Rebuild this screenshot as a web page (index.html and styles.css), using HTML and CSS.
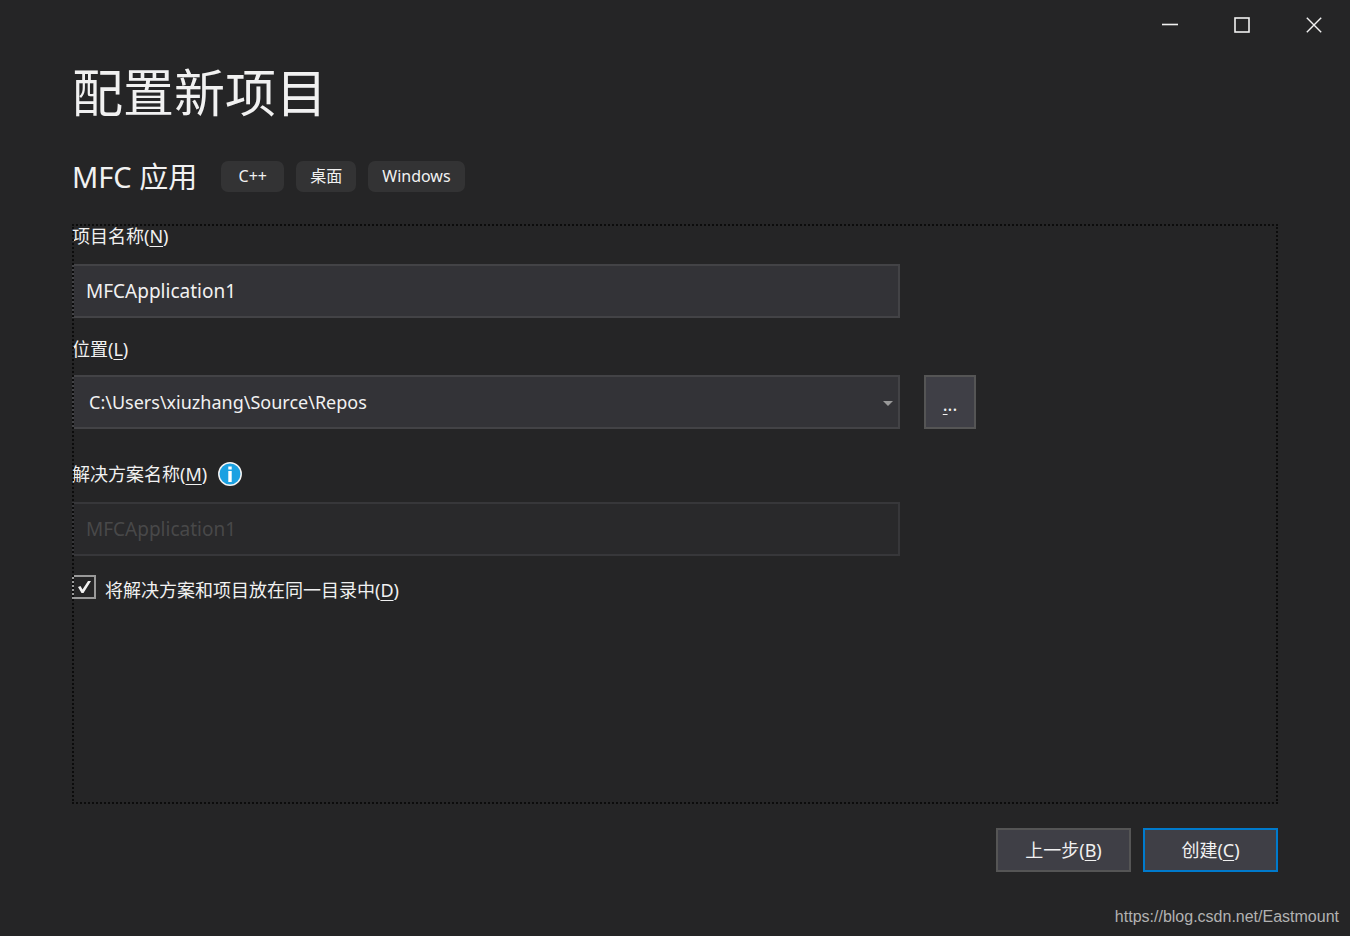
FILE: index.html
```html
<!DOCTYPE html>
<html lang="zh-CN">
<head>
<meta charset="utf-8">
<meta name="viewport" content="width=device-width, initial-scale=1">
<title>配置新项目</title>
<link rel="stylesheet" href="styles.css">
</head>
<body>
<div class="window">
  <header class="titlebar">
    <button class="caption" type="button" aria-label="最小化"><svg width="16" height="16" viewBox="0 0 16 16"><path d="M0 7.5H16" stroke="#f1f1f1" stroke-width="1.6"/></svg></button>
    <button class="caption" type="button" aria-label="最大化"><svg width="16" height="16" viewBox="0 0 16 16"><rect x="1" y="1" width="14" height="14" fill="none" stroke="#f1f1f1" stroke-width="1.6"/></svg></button>
    <button class="caption" type="button" aria-label="关闭"><svg width="16" height="16" viewBox="0 0 16 16"><path d="M.8 .8L15.2 15.2M15.2 .8L.8 15.2" stroke="#f1f1f1" stroke-width="1.4"/></svg></button>
  </header>
  <main class="content">
    <h1 class="title">配置新项目</h1>
    <div class="template">
      <h2 class="template-name">MFC 应用</h2>
      <ul class="tags">
        <li class="tag">C++</li>
        <li class="tag">桌面</li>
        <li class="tag">Windows</li>
      </ul>
    </div>
    <form class="panel">
      <div class="field">
        <label class="label" for="project">项目名称(<u>N</u>)</label>
        <input class="box" id="project" type="text" value="MFCApplication1">
      </div>
      <div class="field field-location">
        <label class="label" for="location">位置(<u>L</u>)</label>
        <div class="location">
          <div class="combo">
            <select class="box combo-box" id="location"><option>C:\Users\xiuzhang\Source\Repos</option></select>
            <svg class="arrow" width="10" height="5" viewBox="0 0 10 5"><path d="M0 0H10L5 5Z" fill="#999"/></svg>
          </div>
          <button class="button browse" type="button" aria-label="浏览"><span><u>.</u>..</span></button>
        </div>
      </div>
      <div class="field">
        <div class="label-row">
          <label class="label" for="solution">解决方案名称(<u>M</u>)</label>
          <svg width="24" height="24" viewBox="0 0 24 24" role="img" aria-label="信息"><circle cx="12" cy="12" r="11.2" fill="#1ba1e2" stroke="#f4f4f4" stroke-width="1.5"/><path d="M10.3 4.5H13.7V7.5H10.3ZM10.3 9H13.7V20H10.3Z" fill="#fff"/></svg>
        </div>
        <input class="box" id="solution" type="text" value="MFCApplication1" disabled>
      </div>
      <div class="check-row">
        <input class="check" id="same" type="checkbox" checked>
        <label class="check-label" for="same">将解决方案和项目放在同一目录中(<u>D</u>)</label>
      </div>
    </form>
    <footer class="actions">
      <button class="button action" type="button">上一步(<u>B</u>)</button>
      <button class="button action primary" type="button">创建(<u>C</u>)</button>
    </footer>
  </main>
  <a class="watermark" href="https://blog.csdn.net/Eastmount">https://blog.csdn.net/Eastmount</a>
</div>
</body>
</html>
```
FILE: styles.css
```css
* {
  box-sizing: border-box;
}

body {
  margin: 0;
  background: #252526;
  color: #f1f1f1;
  font: 18px/24px "Noto Sans", "Noto Sans CJK SC", sans-serif;
}

button,
input,
select {
  margin: 0;
  color: inherit;
  font: inherit;
}

u {
  text-decoration-thickness: 1px;
  text-underline-offset: 3px;
}

.window {
  position: relative;
  display: flex;
  flex-direction: column;
  min-height: 100vh;
}

.titlebar {
  display: flex;
  justify-content: flex-end;
  height: 50px;
}

.caption {
  display: flex;
  align-items: center;
  justify-content: center;
  width: 72px;
  padding: 0;
  border: 0;
  background: none;
}

.content {
  display: flex;
  flex: 1;
  flex-direction: column;
  padding: 4px 72px 64px;
}

.title {
  margin: 0 0 35px;
  font-size: 51px;
  font-weight: 400;
  font-family: "Noto Sans CJK SC", sans-serif;
  line-height: 72px;
}

.template {
  display: flex;
  align-items: center;
  gap: 24px;
  margin-bottom: 32px;
}

.template-name {
  margin: 0;
  font-size: 29px;
  font-weight: 400;
  line-height: 31px;
}

.tags {
  display: flex;
  gap: 12px;
  margin: 0;
  padding: 0;
  list-style: none;
}

.tag {
  padding: 4px 14px;
  border-radius: 7px;
  background: #333334;
  font-size: 16px;
  line-height: 23px;
  text-align: center;
}

.tag:first-child {
  min-width: 63px;
}

.panel {
  position: relative;
  display: flex;
  flex: 1;
  flex-direction: column;
}

.panel::after {
  position: absolute;
  inset: 0;
  border: 2px dotted #0c0c0c;
  content: "";
  pointer-events: none;
}

.field {
  display: flex;
  flex-direction: column;
  gap: 16px;
  margin-bottom: 19px;
}

.field-location {
  gap: 14px;
}

.label-row {
  display: flex;
  align-items: center;
  gap: 11px;
  margin-top: 14px;
}

.box {
  width: 100%;
  max-width: 828px;
  height: 54px;
  padding: 0 12px;
  border: 2px solid #434346;
  border-radius: 0;
  background: #333337;
  font-size: 19px;
}

.box:disabled {
  border-color: #37373a;
  background: #29292b;
  color: #484849;
}

.location {
  display: grid;
  grid-template-columns: minmax(0, 828px) 52px;
  gap: 24px;
}

.combo {
  position: relative;
}

.combo-box {
  padding-left: 15px;
  font-size: 18px;
  appearance: none;
}

.arrow {
  position: absolute;
  top: 26px;
  right: 7px;
}

.button {
  padding: 0;
  border: 2px solid #555;
  background: #3f3f46;
}

.browse {
  padding-top: 4px;
}

.check-row {
  display: flex;
  align-items: flex-start;
  gap: 9px;
}

.check {
  width: 24px;
  height: 24px;
  border: 2px solid #999;
  background: #252526;
  appearance: none;
}

.check:checked {
  background: #252526 url("data:image/svg+xml,%3Csvg xmlns='http://www.w3.org/2000/svg' viewBox='0 0 20 20'%3E%3Cpath d='M4 10L6.5 9L8.5 12.5L14 4H17L9.5 16H7.5Z' fill='%23f1f1f1'/%3E%3C/svg%3E") center / 20px no-repeat;
}

.check-label {
  padding-top: 3px;
}

.actions {
  display: flex;
  justify-content: flex-end;
  gap: 12px;
  margin-top: 24px;
}

.action {
  width: 135px;
  height: 44px;
}

.primary {
  border-color: #007acc;
}

.watermark {
  position: absolute;
  right: 11px;
  bottom: 8px;
  color: #b2b2b2;
  font: 16px/22px "Liberation Sans", sans-serif;
  text-decoration: none;
}
```
